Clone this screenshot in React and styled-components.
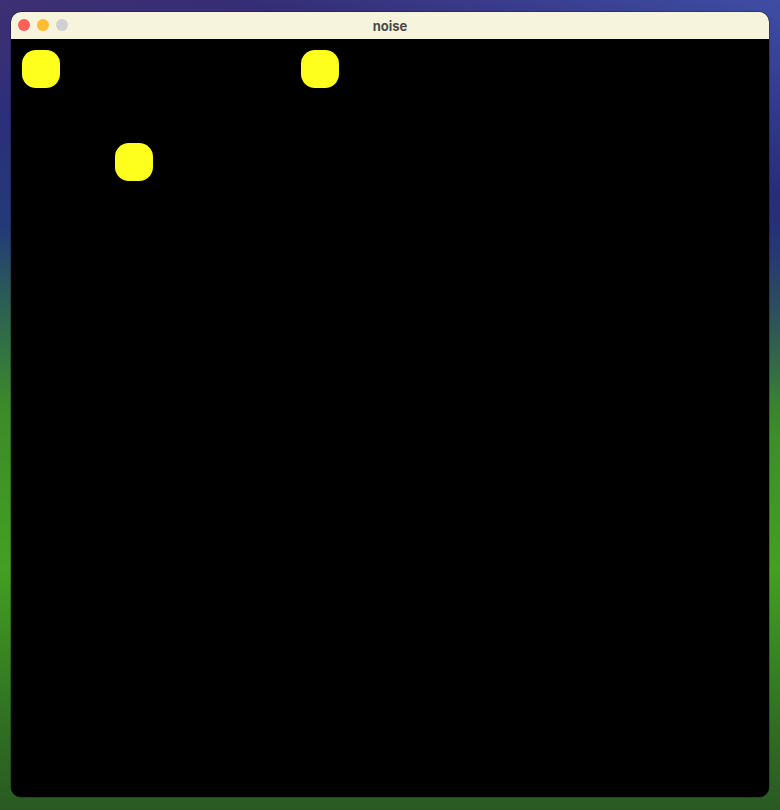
import React from "react";
import styled, { createGlobalStyle } from "styled-components";

const GlobalStyle = createGlobalStyle`
  html, body {
    margin: 0;
    padding: 0;
    height: 100%;
  }
  body {
    font-family: "Inter", "Liberation Sans", sans-serif;
    background:
      linear-gradient(200deg, rgba(60, 80, 170, 0.9) 0%, rgba(40, 40, 120, 0.6) 18%, rgba(0, 0, 0, 0) 40%),
      linear-gradient(180deg, #4b3470 0%, #2c2f7a 14%, #233a78 28%, #2a5a5a 36%, #3b8a2a 50%, #43a022 70%, #2f6e22 90%, #2a5a22 100%);
  }
`;

const Desktop = styled.div`
  width: 780px;
  height: 810px;
  box-sizing: border-box;
  padding: 12px 11px 13px 11px;
  display: flex;
`;

const Window = styled.div`
  flex: 1;
  display: flex;
  flex-direction: column;
  border-radius: 10px;
  overflow: hidden;
  background: #000;
  box-shadow: 0 0 0 0.5px rgba(0, 0, 0, 0.5);
`;

const TitleBar = styled.div`
  height: 27px;
  flex-shrink: 0;
  background: #f6f4dc;
  position: relative;
  display: flex;
  align-items: center;
  justify-content: center;
`;

const Lights = styled.div`
  position: absolute;
  left: 7px;
  top: 7px;
  display: flex;
  gap: 7px;
`;

const Light = styled.span`
  width: 12px;
  height: 12px;
  border-radius: 50%;
  background: ${(p) => p.color};
`;

const Title = styled.div`
  font-size: 13px;
  font-weight: 700;
  color: #4a4a4a;
`;

const Canvas = styled.div`
  flex: 1;
  display: grid;
  grid-template-columns: repeat(8, 93px);
  grid-auto-rows: 93px;
  align-content: start;
`;

const Cell = styled.div`
  padding: 11px;
`;

const Blob = styled.div`
  width: 38px;
  height: 38px;
  border-radius: 14px;
  background: #ffff1e;
`;

const cells = Array.from({ length: 16 }, (_, i) => i);
const lit = new Set([0, 3, 9]);

export default function App() {
  return (
    <>
      <GlobalStyle />
      <Desktop>
        <Window>
          <TitleBar>
            <Lights>
              <Light color="#fe5f57" />
              <Light color="#febc2e" />
              <Light color="#cfcfcf" />
            </Lights>
            <Title>noise</Title>
          </TitleBar>
          <Canvas>
            {cells.map((i) => (
              <Cell key={i}>{lit.has(i) && <Blob />}</Cell>
            ))}
          </Canvas>
        </Window>
      </Desktop>
    </>
  );
}
